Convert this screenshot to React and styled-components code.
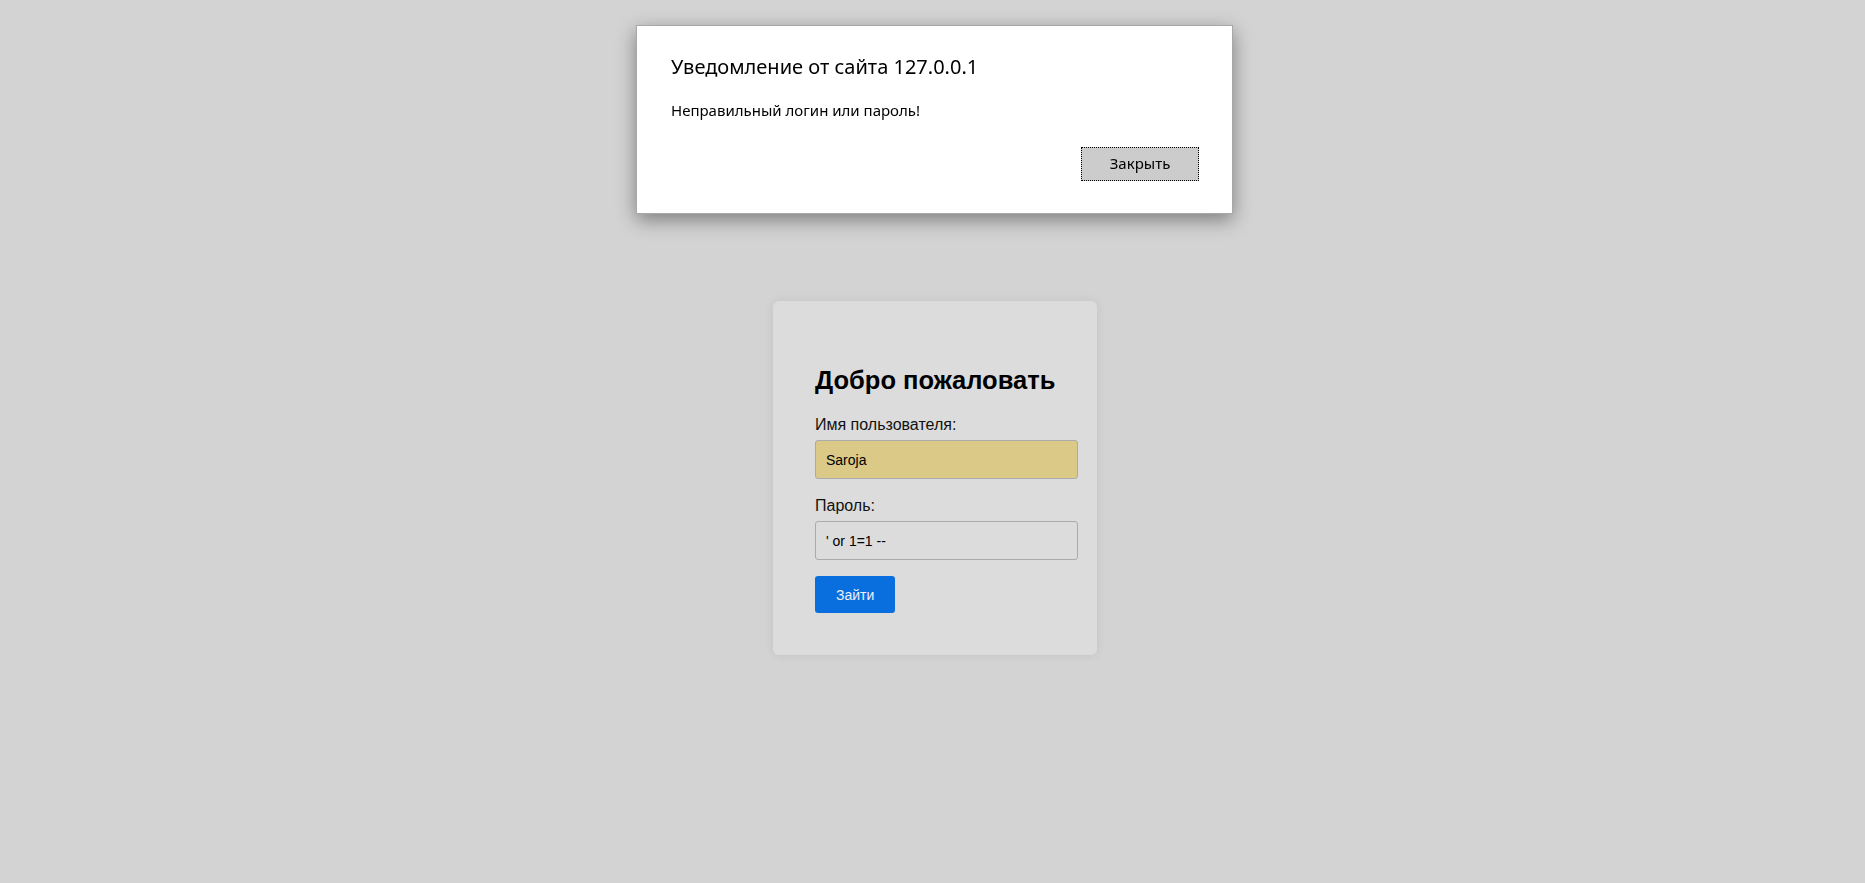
import React from "react";
import styled, { createGlobalStyle } from "styled-components";

const GlobalStyle = createGlobalStyle`
  html, body {
    margin: 0;
    padding: 0;
    background: #d3d3d3;
  }
  * { box-sizing: border-box; }
`;

const Page = styled.div`
  min-height: 100vh;
  background: #d3d3d3;
  display: flex;
  justify-content: center;
  align-items: flex-start;
  padding: 301px 0 0 5px;
  font-family: "Liberation Sans", Arial, sans-serif;
`;

const Card = styled.div`
  width: 324px;
  padding: 42px 19px 42px 42px;
  background: #dcdcdc;
  border-radius: 6px;
  box-shadow: 0 0 10px rgba(0, 0, 0, 0.08);
`;

const Heading = styled.h2`
  margin: 22px 0 20px;
  font-size: 25.5px;
  line-height: 30px;
  font-weight: 700;
  color: #000;
`;

const Label = styled.label`
  display: block;
  font-size: 16px;
  line-height: 19px;
  margin-bottom: 6px;
  color: #111;
`;

const Input = styled.input`
  display: block;
  width: 100%;
  height: 39px;
  padding: 0 10px;
  margin-bottom: ${(p) => (p.$last ? "16px" : "17px")};
  border: 1px solid #ababab;
  border-radius: 3px;
  background: ${(p) => (p.$autofill ? "#dac987" : "#dcdcdc")};
  font-family: "Liberation Sans", Arial, sans-serif;
  font-size: 14px;
  color: #000;
  outline: none;
`;

const SubmitButton = styled.button`
  display: block;
  padding: 0 21px;
  height: 37px;
  border: none;
  border-radius: 3px;
  background: #0a6fde;
  color: #eef0fb;
  font-family: "Liberation Sans", Arial, sans-serif;
  font-size: 14px;
  cursor: pointer;
`;

const Dialog = styled.div`
  position: fixed;
  top: 25px;
  left: 636px;
  width: 597px;
  height: 189px;
  background: #fff;
  border: 1px solid #a8a8a8;
  box-shadow: 0 6px 18px rgba(0, 0, 0, 0.4);
  display: flex;
  flex-direction: column;
  padding: 29px 33px 0 34px;
  font-family: "Noto Sans", "Open Sans", sans-serif;
  color: #000;
`;

const DialogTitle = styled.div`
  font-size: 20px;
  line-height: 24px;
  margin-bottom: 21px;
`;

const DialogMessage = styled.div`
  font-size: 15px;
  line-height: 20px;
  margin-bottom: 27px;
`;

const DialogButton = styled.button`
  align-self: flex-end;
  width: 118px;
  height: 34px;
  background: #cccccc;
  border: 1px dotted #000;
  font-family: "Noto Sans", "Open Sans", sans-serif;
  font-size: 15px;
  line-height: 30px;
  color: #000;
  padding: 0 0 2px;
`;

export default function App() {
  return (
    <>
      <GlobalStyle />
      <Page>
        <Card>
          <Heading>Добро пожаловать</Heading>
          <Label>Имя пользователя:</Label>
          <Input $autofill defaultValue="Saroja" />
          <Label>Пароль:</Label>
          <Input $last defaultValue="' or 1=1 --" />
          <SubmitButton>Зайти</SubmitButton>
        </Card>
      </Page>
      <Dialog>
        <DialogTitle>Уведомление от сайта 127.0.0.1</DialogTitle>
        <DialogMessage>Неправильный логин или пароль!</DialogMessage>
        <DialogButton>Закрыть</DialogButton>
      </Dialog>
    </>
  );
}
